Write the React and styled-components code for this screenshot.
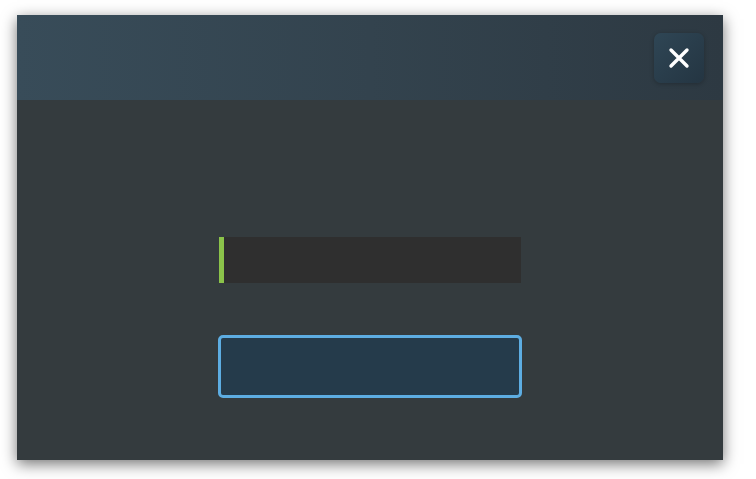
import React from "react";
import styled, { createGlobalStyle } from "styled-components";

const GlobalStyle = createGlobalStyle`
  html, body {
    margin: 0;
    padding: 0;
    background: #ffffff;
    font-family: "Liberation Sans", Arial, sans-serif;
  }
`;

const Page = styled.div`
  padding: 15px 0 19px 17px;
`;

const Modal = styled.div`
  width: 706px;
  height: 445px;
  display: flex;
  flex-direction: column;
  background: #343b3e;
  box-shadow: 0 4px 14px rgba(0, 0, 0, 0.55);
`;

const Header = styled.div`
  height: 85px;
  flex: 0 0 85px;
  display: flex;
  justify-content: flex-end;
  align-items: flex-start;
  padding: 18px 19px 0 0;
  box-sizing: border-box;
  background: linear-gradient(90deg, #384c59 0%, #33434e 50%, #2d3942 100%);
`;

const CloseButton = styled.button`
  width: 50px;
  height: 50px;
  border: none;
  border-radius: 7px;
  padding: 0;
  display: flex;
  align-items: center;
  justify-content: center;
  cursor: pointer;
  background: linear-gradient(135deg, #2f4655 0%, #243542 100%);
  box-shadow: 0 1px 4px rgba(0, 0, 0, 0.25);
`;

const Body = styled.div`
  flex: 1;
  display: flex;
  flex-direction: column;
  align-items: center;
  padding-top: 137px;
  gap: 52px;
`;

const Input = styled.input`
  width: 302px;
  height: 46px;
  box-sizing: border-box;
  border: none;
  border-left: 5px solid #8bc34a;
  background: #2f2f2f;
  color: #ffffff;
  padding: 0 10px;
  font-size: 16px;
  font-family: inherit;
  outline: none;
`;

const SubmitButton = styled.button`
  width: 304px;
  height: 63px;
  box-sizing: border-box;
  border: 3px solid #5dade2;
  border-radius: 5px;
  background: #253b4b;
  cursor: pointer;
`;

const App = () => {
  return (
    <>
      <GlobalStyle />
      <Page>
        <Modal>
          <Header>
            <CloseButton aria-label="Close">
              <svg width="22" height="22" viewBox="0 0 22 22">
                <path
                  d="M3 3 L19 19 M19 3 L3 19"
                  stroke="#ffffff"
                  strokeWidth="3.4"
                  strokeLinecap="round"
                />
              </svg>
            </CloseButton>
          </Header>
          <Body>
            <Input type="text" />
            <SubmitButton />
          </Body>
        </Modal>
      </Page>
    </>
  );
};

export default App;
